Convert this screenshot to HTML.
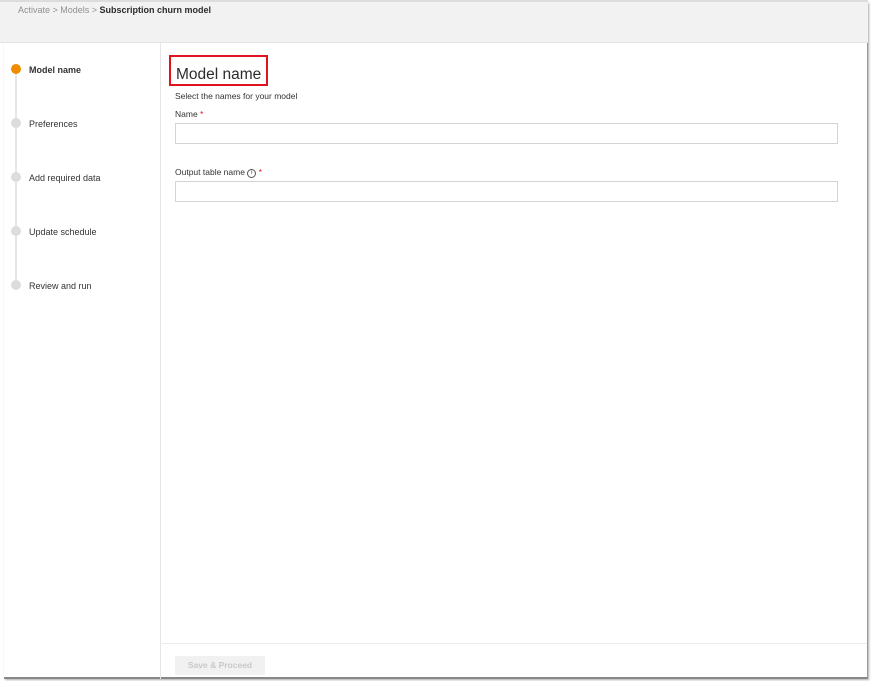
<!DOCTYPE html>
<html><head><style>
*{margin:0;padding:0;box-sizing:border-box}
body{width:871px;height:681px;background:#fff;font-family:"Liberation Sans",sans-serif;position:relative;overflow:hidden;color:#2c2c2c}
.frame{position:absolute;left:4px;top:2px;width:864px;height:677px;border-right:1px solid #999;border-bottom:2px solid #888;box-shadow:1px 1px 2px #aaa;background:#fff}
.top{position:absolute;left:0;top:0;width:868px;height:43px;background:#f2f2f2;border-bottom:1px solid #e4e4e4;border-top:2px solid #dcdcdc}
.bc{position:absolute;left:18px;top:3px;font-size:9px;color:#909090}
.bc b{color:#2c2c2c}
.side{position:absolute;left:4px;top:43px;width:157px;height:636px;border-right:1px solid #e6e6e6}
.dot{position:absolute;left:7px;width:10px;height:10px;border-radius:50%;background:#ddd}
.line{position:absolute;left:11px;top:30px;width:2px;height:215px;background:#e6e6e6}
.st{position:absolute;left:25px;font-size:9px;color:#333}
.h{position:absolute;left:169px;top:55px;width:99px;height:31px;border:2px solid #e0141e}
.h span{position:absolute;left:5px;top:9px;font-size:15.5px;color:#2c2c2c}
.lbl{position:absolute;left:175px;font-size:8.5px;color:#333}
.in{position:absolute;left:175px;width:663px;height:21px;border:1px solid #d4d4d4}
.foot{position:absolute;left:162px;top:643px;width:705px;border-top:1px solid #ececec}
.btn{position:absolute;left:175px;top:656px;width:90px;height:19px;background:#f1f1f1;color:#c8c8c8;font-size:8.5px;text-align:center;line-height:19px;font-weight:bold}
</style></head><body>
<div class="frame"></div>
<div class="top"><div class="bc">Activate &gt; Models &gt; <b>Subscription churn model</b></div></div>
<div class="side">
<div class="line"></div>
<div class="dot" style="top:21px;background:#f08c00"></div>
<div class="st" style="top:22px;font-weight:bold">Model name</div>
<div class="dot" style="top:75px"></div><div class="st" style="top:76px">Preferences</div>
<div class="dot" style="top:129px"></div><div class="st" style="top:130px">Add required data</div>
<div class="dot" style="top:183px"></div><div class="st" style="top:184px">Update schedule</div>
<div class="dot" style="top:237px"></div><div class="st" style="top:238px">Review and run</div>
</div>
<div class="h"><span>Model name</span></div>
<div class="lbl" style="top:91px">Select the names for your model</div>
<div class="lbl" style="top:109px">Name <span style="color:#e0141e">*</span></div>
<div class="in" style="top:123px"></div>
<div class="lbl" style="top:167px">Output table name <span style="display:inline-block;width:9px;height:9px;border:1px solid #555;border-radius:50%;font-size:6px;text-align:center;line-height:7px;vertical-align:1px">i</span> <span style="color:#e0141e">*</span></div>
<div class="in" style="top:181px"></div>
<div class="foot"></div>
<div class="btn">Save &amp; Proceed</div>
</body></html>
